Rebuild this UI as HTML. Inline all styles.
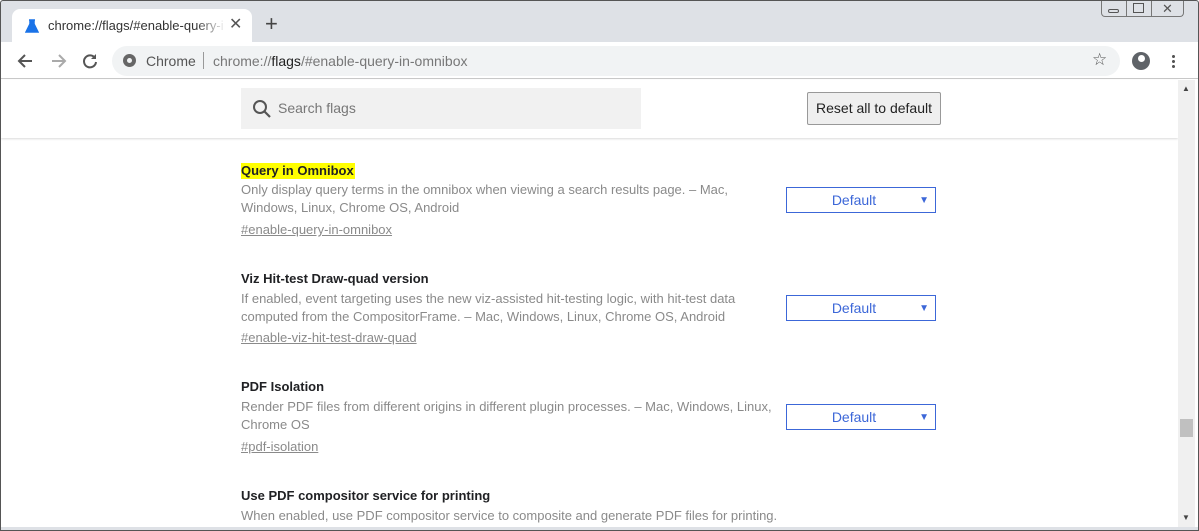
<!DOCTYPE html>
<html><head><style>
*{margin:0;padding:0;box-sizing:border-box}
body{width:1199px;height:531px;overflow:hidden;background:#fff;font-family:"Liberation Sans",sans-serif;position:relative}
.abs{position:absolute}
.frame{left:0;top:0;width:1199px;height:531px;border:1px solid #555;border-radius:3px 3px 0 0}
.tabstrip{left:1px;top:1px;width:1197px;height:41px;background:#dee1e6}
.tab{left:12px;top:9px;width:240px;height:33px;background:#fff;border-radius:8px 8px 0 0}
.toolbar{left:1px;top:42px;width:1197px;height:37px;background:#fff;border-bottom:1px solid #c8c8c8}
.omni{left:112px;top:46px;width:1008px;height:30px;background:#f1f3f4;border-radius:15px}
.t13{font-size:13px}
.desc{color:#8a8a8a;font-size:13px;line-height:18px}
.title{font-size:13px;font-weight:bold;color:#202124}
.link{color:#8a8a8a;font-size:13px;text-decoration:underline}
.dd{width:150px;height:26px;border:1px solid #3c67d8;color:#3c67d8;font-size:14px;text-align:center;line-height:24px;padding-right:14px}
.dd span{position:absolute;right:6px;top:1px;font-size:10px}
</style></head><body>
<div class="abs tabstrip"></div>
<div class="abs tab"></div>
<svg class="abs" style="left:25px;top:19px" width="14" height="14"><path d="M4 1h6M5 1v4L1 13h12L9 5V1" fill="#1a73e8" stroke="#1a73e8" stroke-width="1.5"/></svg>
<div class="abs t13" style="left:48px;top:18px;color:#333;width:175px;overflow:hidden;white-space:nowrap">chrome://flags/#enable-query-in</div>
<div class="abs" style="left:196px;top:14px;width:30px;height:20px;background:linear-gradient(90deg,rgba(255,255,255,0),#fff)"></div>
<div class="abs" style="left:229px;top:14px;font-size:16px;color:#555">✕</div>
<div class="abs" style="left:265px;top:11px;font-size:22px;color:#444">+</div>
<div class="abs" style="left:1101px;top:0;width:83px;height:17px;border:1px solid #777;border-top:none;border-radius:0 0 4px 4px;background:#dee1e6"></div>
<div class="abs" style="left:1126px;top:0;width:1px;height:17px;background:#777"></div>
<div class="abs" style="left:1151px;top:0;width:1px;height:17px;background:#777"></div>
<div class="abs" style="left:1108px;top:9px;width:11px;height:4px;border:1px solid #555;border-radius:2px"></div>
<div class="abs" style="left:1133px;top:3px;width:11px;height:10px;border:1px solid #555"></div>
<div class="abs" style="left:1162px;top:1px;font-size:13px;color:#555">✕</div>
<div class="abs toolbar"></div>
<svg class="abs" style="left:16px;top:52px" width="18" height="18"><path d="M16 9H3M9 3L3 9l6 6" fill="none" stroke="#555" stroke-width="2"/></svg>
<svg class="abs" style="left:50px;top:52px" width="18" height="18"><path d="M2 9h13M9 3l6 6-6 6" fill="none" stroke="#aaa" stroke-width="2"/></svg>
<svg class="abs" style="left:81px;top:52px" width="18" height="18"><path d="M14 6A6 6 0 1 0 15 10" fill="none" stroke="#555" stroke-width="2"/><path d="M15 2v5h-5z" fill="#555"/></svg>
<div class="abs omni"></div>
<div class="abs" style="left:123px;top:54px;width:13px;height:13px;border-radius:50%;background:#666"><div style="margin:4px;width:5px;height:5px;border-radius:50%;background:#f1f3f4"></div></div>
<div class="abs" style="left:146px;top:53px;font-size:14px;color:#555">Chrome</div>
<div class="abs" style="left:203px;top:52px;width:1px;height:17px;background:#999"></div>
<div class="abs" style="left:213px;top:53px;font-size:14px;color:#777">chrome://<span style="color:#222">flags</span>/#enable-query-in-omnibox</div>
<div class="abs" style="left:1092px;top:50px;font-size:17px;color:#555">☆</div>
<div class="abs" style="left:1132px;top:52px;width:18px;height:18px;border-radius:50%;background:#5f6368"><div style="margin:3px auto 0;width:7px;height:7px;border-radius:50%;background:#fff"></div></div>
<div class="abs" style="left:1172px;top:54px;width:3px;height:14px;background:radial-gradient(circle,#555 1.4px,transparent 1.6px) 0 0/3px 5px"></div>
<div class="abs" style="left:1px;top:80px;width:1177px;height:58px;background:#fff;box-shadow:0 1px 2px rgba(0,0,0,.15)"></div>
<div class="abs" style="left:241px;top:88px;width:400px;height:41px;background:#f1f1f1"></div>
<svg class="abs" style="left:252px;top:99px" width="20" height="20"><circle cx="8" cy="8" r="6" fill="none" stroke="#555" stroke-width="2"/><path d="M12 12l6 6" stroke="#555" stroke-width="2.2"/></svg>
<div class="abs" style="left:278px;top:100px;font-size:14px;color:#777">Search flags</div>
<div class="abs" style="left:807px;top:92px;width:134px;height:33px;background:#efefef;border:1px solid #999;border-radius:2px;font-size:14px;color:#222;text-align:center;line-height:31px">Reset all to default</div>

<div class="abs title" style="left:241px;top:163px;background:#ff0;padding:0 1px 1px 0">Query in Omnibox</div>
<div class="abs desc" style="left:241px;top:181px;width:540px">Only display query terms in the omnibox when viewing a search results page. – Mac, Windows, Linux, Chrome OS, Android</div>
<div class="abs link" style="left:241px;top:222px">#enable-query-in-omnibox</div>
<div class="abs dd" style="left:786px;top:187px">Default<span>▼</span></div>

<div class="abs title" style="left:241px;top:271px">Viz Hit-test Draw-quad version</div>
<div class="abs desc" style="left:241px;top:290px;width:540px">If enabled, event targeting uses the new viz-assisted hit-testing logic, with hit-test data computed from the CompositorFrame. – Mac, Windows, Linux, Chrome OS, Android</div>
<div class="abs link" style="left:241px;top:330px">#enable-viz-hit-test-draw-quad</div>
<div class="abs dd" style="left:786px;top:295px">Default<span>▼</span></div>

<div class="abs title" style="left:241px;top:379px">PDF Isolation</div>
<div class="abs desc" style="left:241px;top:398px;width:540px">Render PDF files from different origins in different plugin processes. – Mac, Windows, Linux, Chrome OS</div>
<div class="abs link" style="left:241px;top:439px">#pdf-isolation</div>
<div class="abs dd" style="left:786px;top:404px">Default<span>▼</span></div>

<div class="abs title" style="left:241px;top:488px">Use PDF compositor service for printing</div>
<div class="abs desc" style="left:241px;top:507px;width:560px;white-space:nowrap">When enabled, use PDF compositor service to composite and generate PDF files for printing.</div>

<div class="abs" style="left:1178px;top:80px;width:17px;height:447px;background:#f0f0f0"></div>
<div class="abs" style="left:1182px;top:84px;font-size:8px;color:#444">▲</div>
<div class="abs" style="left:1182px;top:513px;font-size:8px;color:#444">▼</div>
<div class="abs" style="left:1180px;top:419px;width:13px;height:18px;background:#c0c0c0"></div>
<div class="abs" style="left:0;top:527px;width:1199px;height:4px;background:#dee1e6;border-bottom:1px solid #555"></div>
<div class="abs frame"></div>
</body></html>
